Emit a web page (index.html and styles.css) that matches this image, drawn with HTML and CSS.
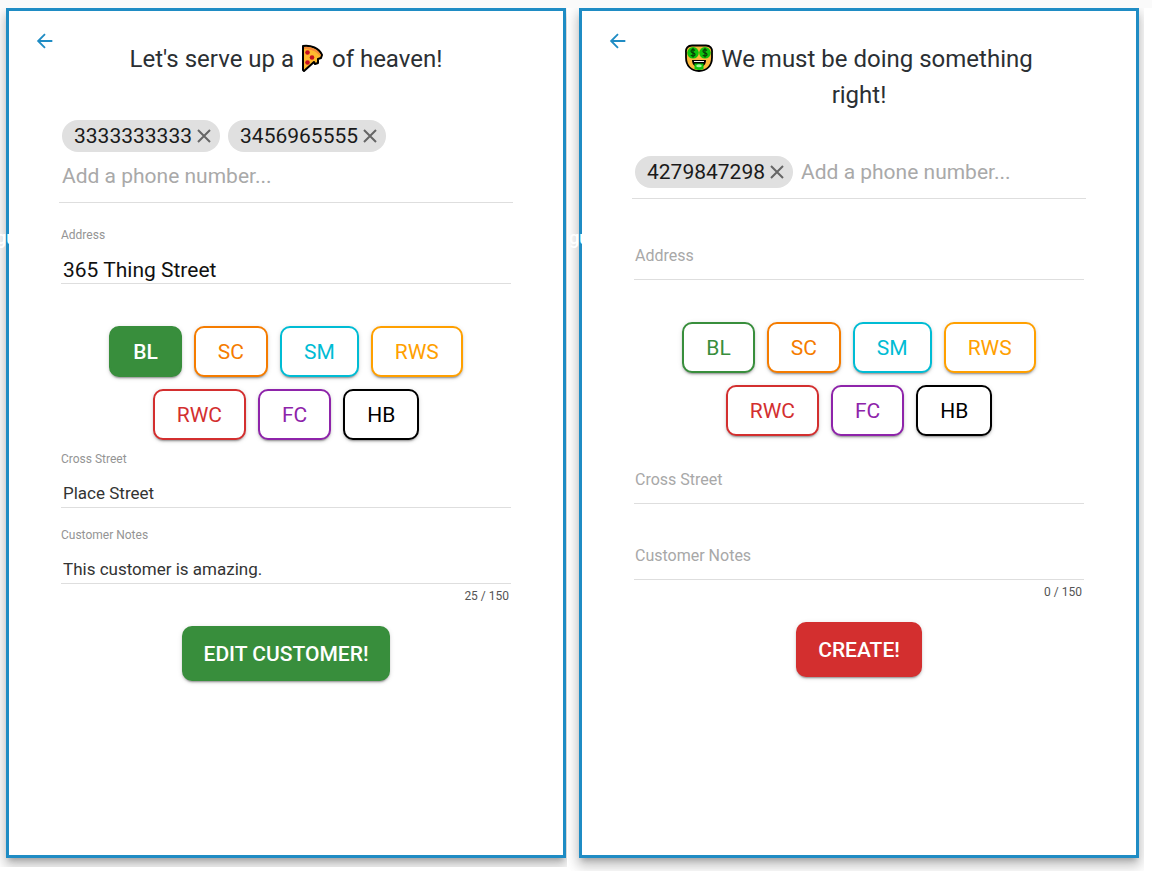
FILE: index.html
```html
<!DOCTYPE html>
<html lang="en">
<head>
<meta charset="utf-8">
<meta name="viewport" content="width=device-width, initial-scale=1">
<title>Customers</title>
<link rel="stylesheet" href="styles.css">
</head>
<body>
<main class="screens">
  <form class="card card-edit">
    <span class="backdrop-text" aria-hidden="true">gu</span>
    <header class="header">
      <button type="button" class="back" aria-label="Back"><svg viewBox="0 0 24 24"><path d="M20 12H5M12 4.5 4.5 12l7.5 7.5"/></svg></button>
      <h1 class="title">Let's serve up a
        <svg class="emoji pizza" viewBox="0 0 26 28" role="img" aria-label="pizza"><path d="M3 2C11 1 19 4 22 11l-1 3-3 1v4l-3 1-1-2-10 9-1-1z" fill="#fdb92e" stroke="#000" stroke-width="2" stroke-linejoin="round"/><path d="M4 3c7-.5 14 2 17 8l-1 1C16 7 11 5 4 5z" fill="#f58a3a"/><g fill="#c50f1f"><circle cx="7.500" cy="8.500" r="2.300"/><circle cx="12" cy="13.500" r="2.300"/><circle cx="7.500" cy="18.500" r="2.300"/></g></svg>
        of heaven!</h1>
    </header>
    <div class="phones">
      <span class="chip">3333333333<button type="button" class="remove" aria-label="Remove 3333333333"><svg viewBox="0 0 20 20"><path d="m4 4 12 12M16 4 4 16"/></svg></button></span>
      <span class="chip">3456965555<button type="button" class="remove" aria-label="Remove 3456965555"><svg viewBox="0 0 20 20"><path d="m4 4 12 12M16 4 4 16"/></svg></button></span>
      <input class="phone-input" type="tel" aria-label="Phone number" placeholder="Add a phone number...">
    </div>
    <div class="field field-address">
      <label for="edit-address">Address</label>
      <input id="edit-address" type="text" value="365 Thing Street">
    </div>
    <div class="areas">
      <button type="button" class="area bl selected">BL</button>
      <button type="button" class="area sc">SC</button>
      <button type="button" class="area sm">SM</button>
      <button type="button" class="area rws">RWS</button>
      <button type="button" class="area rwc">RWC</button>
      <button type="button" class="area fc">FC</button>
      <button type="button" class="area hb">HB</button>
    </div>
    <div class="field field-cross">
      <label for="edit-cross">Cross Street</label>
      <input id="edit-cross" type="text" value="Place Street">
    </div>
    <div class="field field-notes">
      <label for="edit-notes">Customer Notes</label>
      <input id="edit-notes" type="text" maxlength="150" value="This customer is amazing.">
    </div>
    <p class="counter">25 / 150</p>
    <button type="submit" class="submit submit-edit">EDIT CUSTOMER!</button>
  </form>

  <form class="card card-create">
    <span class="backdrop-text" aria-hidden="true">gu</span>
    <header class="header">
      <button type="button" class="back" aria-label="Back"><svg viewBox="0 0 24 24"><path d="M20 12H5M12 4.500 4.500 12l7.500 7.500"/></svg></button>
      <h1 class="title">
        <svg class="emoji money" viewBox="0 0 28 28" role="img" aria-label="money face"><path d="M7 1.500h14c4 0 6.500 2.500 6 7v5c0 8-5 13.500-13 13.500S1 21.500 1 13.500v-5c-.5-4.500 2-7 6-7z" fill="#fdb93c" stroke="#000" stroke-width="1.800"/><g fill="#0dc40d"><circle cx="8" cy="8.800" r="5.800"/><circle cx="20" cy="8.800" r="5.800"/></g><path d="M10 6.500C8.500 5 6 5.500 6 7.300c0 2 4 1 4 3.100 0 1.800-2.700 2.200-4.200.7M8 4v9.500M22 6.500c-1.500-1.500-4-1-4 .8 0 2 4 1 4 3.100 0 1.800-2.700 2.200-4.200.7M20 4v9.500" fill="none" stroke="#063d06" stroke-width="1.200"/><path d="M7 16h14c0 4-2 7-7 7s-7-3-7-7z" fill="#000"/><path d="M9 17h10v1H9z" fill="#f5f5f5"/><path d="M9.500 19.500h9V25c-3 1.300-6 1.300-9 0z" fill="#0dc40d"/><ellipse cx="14" cy="21.800" rx="2.800" ry="1.500" fill="#a6f2a0"/></svg>
        We must be doing something right!</h1>
    </header>
    <div class="phones">
      <span class="chip">4279847298<button type="button" class="remove" aria-label="Remove 4279847298"><svg viewBox="0 0 20 20"><path d="m4 4 12 12M16 4 4 16"/></svg></button></span>
      <input class="phone-input" type="tel" aria-label="Phone number" placeholder="Add a phone number...">
    </div>
    <div class="field field-address empty">
      <label for="new-address">Address</label>
      <input id="new-address" type="text">
    </div>
    <div class="areas">
      <button type="button" class="area bl">BL</button>
      <button type="button" class="area sc">SC</button>
      <button type="button" class="area sm">SM</button>
      <button type="button" class="area rws">RWS</button>
      <button type="button" class="area rwc">RWC</button>
      <button type="button" class="area fc">FC</button>
      <button type="button" class="area hb">HB</button>
    </div>
    <div class="field field-cross empty">
      <label for="new-cross">Cross Street</label>
      <input id="new-cross" type="text">
    </div>
    <div class="field field-notes empty">
      <label for="new-notes">Customer Notes</label>
      <input id="new-notes" type="text" maxlength="150">
    </div>
    <p class="counter">0 / 150</p>
    <button type="submit" class="submit submit-create">CREATE!</button>
  </form>
</main>
</body>
</html>
```
FILE: styles.css
```css
* { box-sizing: border-box; }

body {
  margin: 0;
  background: #fff linear-gradient(#fafafa, #fafafa) top / 100% 8px no-repeat;
  font-family: Roboto, "Liberation Sans", sans-serif;
  color: #2b2f33;
}

button, input { font: inherit; }
button { cursor: pointer; }

.screens {
  display: grid;
  grid-template-columns: 1fr 1fr;
  gap: 13px;
  padding: 8px 13px 13px 6px;
}

.card {
  position: relative;
  display: flex;
  flex-direction: column;
  min-height: calc(100vh - 21px);
  border: 3px solid #1f8cc4;
  background: #fff;
  box-shadow: 0 5px 5px -3px rgba(0, 0, 0, .2), 0 8px 10px 1px rgba(0, 0, 0, .14), 0 3px 14px 2px rgba(0, 0, 0, .12);
}
.card-edit { clip-path: inset(0 -1px -9px -6px); }
.card-create { clip-path: inset(0 -5px -13px -11px); }

/* Page text behind the dialog that shows at its left edge */
.backdrop-text {
  position: absolute;
  top: 215px;
  left: -13px;
  font-size: 18px;
  font-weight: 500;
  line-height: 24px;
  color: #fff;
}

.header {
  display: grid;
  grid-template-columns: 24px 1fr 24px;
  padding: 18px 24px 0;
}

.back {
  width: 24px;
  height: 24px;
  padding: 1px;
  border: 0;
  background: none;
}
.back svg { display: block; width: 22px; height: 22px; fill: none; stroke: #1f8cc4; stroke-width: 2; }

.title {
  margin: 12px 0 0;
  padding: 0 50px;
  font-size: 24px;
  font-weight: 400;
  line-height: 36px;
  text-align: center;
}
.emoji { height: 28px; vertical-align: -5px; }
.money { margin-right: 2px; }

.phones {
  display: flex;
  flex-wrap: wrap;
  gap: 8px;
  margin: 43px 50px 0;
  padding: 0 3px 10px;
  border-bottom: 1px solid #dedede;
  font-size: 21px;
}
.chip {
  display: flex;
  align-items: center;
  height: 32px;
  padding: 0 6px 0 12px;
  border-radius: 16px;
  background: #e0e0e0;
  color: #1a1a1a;
}
.remove { width: 22px; height: 20px; padding: 0 0 0 2px; border: 0; background: none; }
.remove svg { display: block; width: 20px; height: 20px; fill: none; stroke: #666; stroke-width: 2; }
.phone-input {
  flex: 1;
  min-width: 220px;
  height: 32px;
  padding: 0;
  border: 0;
  outline: 0;
  background: none;
}
.phone-input::placeholder { color: #a9a9a9; opacity: 1; }

.field {
  display: grid;
  height: 57px;
  margin: 0 52px;
  border-bottom: 1px solid #dedede;
}
.field label, .field input { grid-area: 1 / 1; }
.field label { font-size: 12px; line-height: 16px; color: #949494; }
.field input {
  align-self: end;
  width: 100%;
  height: 28px;
  padding: 0 2px;
  border: 0;
  outline: 0;
  background: none;
  font-size: 17px;
  color: #333;
}
.field.empty label { padding: 23px 1px 0; font-size: 16px; line-height: 20px; color: #a8a8a8; }
.field-address { margin-top: 24px; }
.field-address input { height: 26px; font-size: 21px; color: #111; }
.field-cross { margin-top: 11px; }
.field-notes { margin-top: 19px; }

.areas {
  display: flex;
  flex-wrap: wrap;
  justify-content: center;
  gap: 12px;
  margin: 42px 90px 0;
}
.area, .submit {
  border-radius: 10px;
  box-shadow: 0 3px 1px -2px rgba(0, 0, 0, .2), 0 2px 2px rgba(0, 0, 0, .14), 0 1px 5px rgba(0, 0, 0, .12);
  font-size: 21px;
}
.area {
  height: 51px;
  padding: 0 22px;
  border: 2px solid currentColor;
  background: #fff;
}
.bl { color: #388e3c; }
.sc { color: #f57c00; }
.sm { color: #00bcd4; }
.rws { color: #ffa000; }
.rwc { color: #d32f2f; }
.fc { color: #8e24aa; }
.hb { color: #000; }
.bl.selected { border-color: #388e3c; background: #388e3c; color: #fff; font-weight: 500; }

.counter {
  margin: 4px 54px 22px;
  font-size: 12px;
  line-height: 16px;
  text-align: right;
  color: #555;
}

.submit {
  align-self: center;
  height: 55px;
  padding: 0 22px;
  border: 0;
  color: #fff;
  font-weight: 500;
}
.submit-edit { background: #388e3c; }
.submit-create { background: #d32f2f; }
```
